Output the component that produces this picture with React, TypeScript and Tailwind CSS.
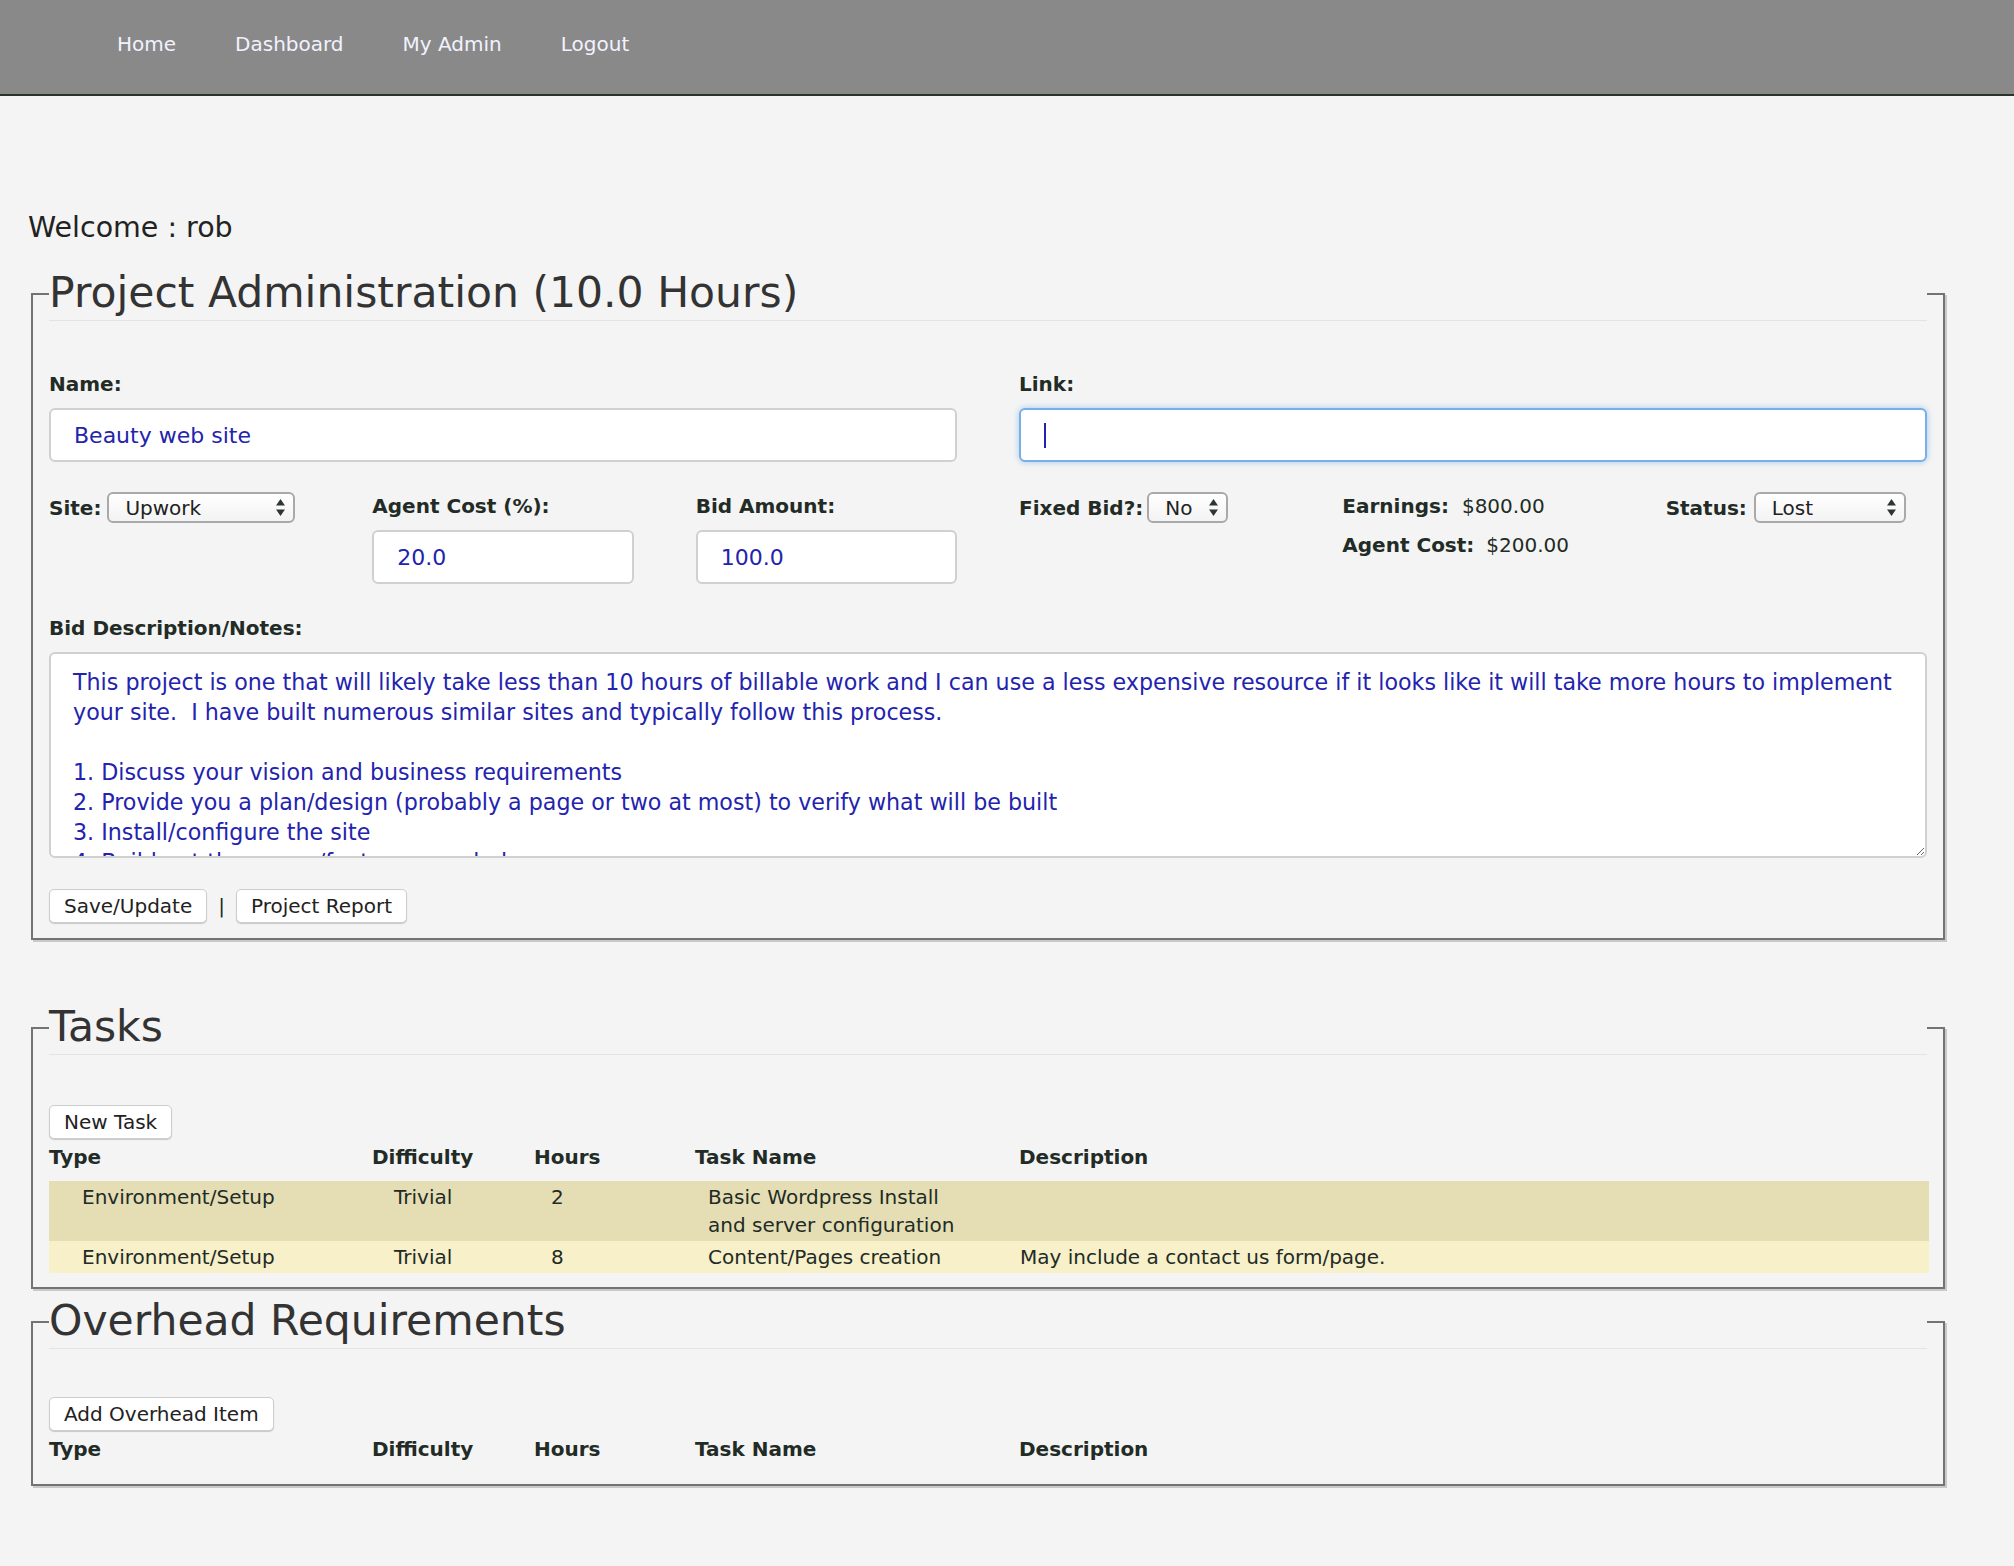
import type { ReactNode } from "react";

const navItems = ["Home", "Dashboard", "My Admin", "Logout"];

const notes = `This project is one that will likely take less than 10 hours of billable work and I can use a less expensive resource if it looks like it will take more hours to implement
your site.  I have built numerous similar sites and typically follow this process.

1. Discuss your vision and business requirements
2. Provide you a plan/design (probably a page or two at most) to verify what will be built
3. Install/configure the site
4. Build out the pages/features needed
5. Review and launch`;

const tasks = [
  { type: "Environment/Setup", difficulty: "Trivial", hours: "2", name: "Basic Wordpress Install and server configuration", description: "", bg: "bg-[#e5deb5]" },
  { type: "Environment/Setup", difficulty: "Trivial", hours: "8", name: "Content/Pages creation", description: "May include a contact us form/page.", bg: "bg-[#f7f0c9]" },
];

function Section({ title, className, children }: { title: string; className: string; children: ReactNode }) {
  return (
    <fieldset className={`ml-[3px] w-[1914px] border-2 border-[#737373] px-[16px] shadow-[2px_2px_0_#c9c9c9] ${className}`}>
      <legend className="w-full border-b border-[#e3e3e3] p-0 text-[42.5px] leading-[54px] text-[#333]">{title}</legend>
      {children}
    </fieldset>
  );
}

function Select({ value, width }: { value: string; width: string }) {
  return (
    <div className={`flex h-[31px] items-center justify-between rounded-[6px] border-2 border-[#a9a9a9] bg-gradient-to-b from-white to-[#f3f3f3] pl-[16px] pr-[8px] text-[20px] leading-none text-[#222] ${width}`}>
      <span>{value}</span>
      <svg width="9" height="17" viewBox="0 0 9 17" fill="#2d3630">
        <path d="M4.5 0 L9 6.5 H0 Z" />
        <path d="M0 10.5 H9 L4.5 17 Z" />
      </svg>
    </div>
  );
}

function Btn({ children }: { children: ReactNode }) {
  return (
    <button className="h-[34px] rounded-[5px] border border-[#cdcdcd] bg-white px-[14px] text-[20px] leading-none text-[#222] shadow-[0_1px_1px_rgba(0,0,0,0.18)]">
      {children}
    </button>
  );
}

const inputCls =
  "h-[54px] w-full rounded-[6px] border-2 border-[#d0d0d0] bg-white pl-[23px] text-[22px] text-[#2323ae] outline-none";

const cols = "grid grid-cols-[323px_162px_161px_324px_1fr]";

function TableHeader() {
  return (
    <div className={`${cols} mt-[4px] text-[20px] font-bold leading-[28px] text-[#222b25]`}>
      <div>Type</div>
      <div>Difficulty</div>
      <div>Hours</div>
      <div>Task Name</div>
      <div>Description</div>
    </div>
  );
}

export default function App() {
  return (
    <div className="min-h-screen bg-[#f4f4f4] font-['DejaVu_Sans',Verdana,sans-serif] text-[#222b25]">
      {/* Top nav */}
      <nav className="flex h-[96px] items-center gap-[59px] border-b-2 border-[#2a3329] bg-[#898989] pb-[6px] pl-[117px] text-[20px] text-[#f2f2ff]">
        {navItems.map((item) => (
          <a key={item} href="#" className="leading-[28px]">
            {item}
          </a>
        ))}
      </nav>

      <main className="pl-[28px]">
        <p className="mt-[112px] text-[28.5px] leading-[40px] text-[#222]">Welcome : rob</p>

        {/* Project */}
        <Section title="Project Administration (10.0 Hours)" className="mt-[18px] pb-[15px]">
          <div className="grid grid-cols-6 gap-x-[62px] pt-[49px]">
            <div className="col-span-3">
              <label className="block text-[20px] font-bold leading-[28px]">Name:</label>
              <input readOnly value="Beauty web site" className={`mt-[10px] ${inputCls}`} />
            </div>
            <div className="col-span-3">
              <label className="block text-[20px] font-bold leading-[28px]">Link:</label>
              <div className="mt-[10px] flex h-[54px] w-full items-center rounded-[6px] border-2 border-[#79aee6] bg-white pl-[23px] shadow-[0_0_6px_rgba(102,175,233,0.6)]">
                <span className="h-[25px] w-[2px] bg-[#2323ae]" />
              </div>
            </div>
          </div>

          <div className="mt-[30px] grid grid-cols-6 items-start gap-x-[62px] text-[20px] leading-[28px]">
            <div className="flex items-center gap-[6px]">
              <span className="font-bold">Site:</span>
              <Select value="Upwork" width="w-[188px]" />
            </div>
            <div>
              <label className="block font-bold">Agent Cost (%):</label>
              <input readOnly value="20.0" className={`mt-[10px] ${inputCls}`} />
            </div>
            <div>
              <label className="block font-bold">Bid Amount:</label>
              <input readOnly value="100.0" className={`mt-[10px] ${inputCls}`} />
            </div>
            <div className="flex items-center gap-[4px]">
              <span className="font-bold">Fixed Bid?:</span>
              <Select value="No" width="w-[81px]" />
            </div>
            <div>
              <div className="flex gap-[13px]">
                <span className="font-bold">Earnings:</span>
                <span>$800.00</span>
              </div>
              <div className="mt-[11px] flex gap-[12px]">
                <span className="font-bold">Agent Cost:</span>
                <span>$200.00</span>
              </div>
            </div>
            <div className="flex items-center gap-[7px]">
              <span className="font-bold">Status:</span>
              <Select value="Lost" width="w-[152px]" />
            </div>
          </div>

          <div className="mt-[30px]">
            <label className="block text-[20px] font-bold leading-[28px]">Bid Description/Notes:</label>
            <textarea
              readOnly
              wrap="off"
              value={notes}
              className="mt-[10px] block h-[206px] w-full resize-y overflow-hidden rounded-[6px] border-2 border-[#d0d0d0] bg-white px-[22px] pt-[13px] text-[22.2px] leading-[30px] text-[#2323ae] outline-none"
            />
          </div>

          <div className="mt-[31px] flex items-center gap-[11px] text-[20px]">
            <Btn>Save/Update</Btn>
            <span>|</span>
            <Btn>Project Report</Btn>
          </div>
        </Section>

        {/* Tasks */}
        <Section title="Tasks" className="mt-[60px] pb-[14px]">
          <div className="pt-[50px]">
            <Btn>New Task</Btn>
          </div>
          <TableHeader />
          <div className="mr-[-2px] mt-[10px] text-[20px] leading-[28px] text-[#222b25]">
            {tasks.map((t, i) => (
              <div key={i} className={`${cols} py-[2px] ${t.bg}`}>
                <div className="pl-[33px]">{t.type}</div>
                <div className="pl-[22px]">{t.difficulty}</div>
                <div className="pl-[17px]">{t.hours}</div>
                <div className="w-[275px] pl-[13px]">{t.name}</div>
                <div className="pl-[1px]">{t.description}</div>
              </div>
            ))}
          </div>
        </Section>

        {/* Overhead */}
        <Section title="Overhead Requirements" className="mt-[5px] pb-[21px]">
          <div className="pt-[48px]">
            <Btn>Add Overhead Item</Btn>
          </div>
          <TableHeader />
        </Section>
      </main>
    </div>
  );
}
